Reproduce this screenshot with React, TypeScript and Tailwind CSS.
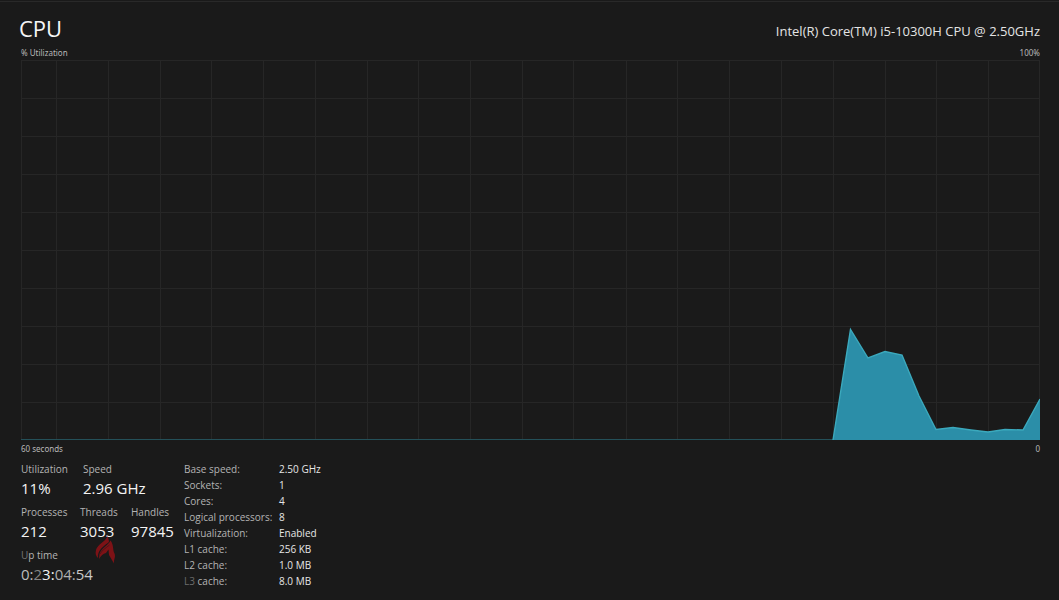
import type { ReactNode } from "react";

const CHART_WIDTH = 1019;
const CHART_HEIGHT = 380;

const columns = [35, 87, 139, 190, 242, 294, 346, 397, 449, 501, 552, 605, 656, 708, 760, 812, 864, 915, 967];
const rows = [38, 76, 114, 152, 190, 228, 266, 304, 342];

const samples =
  "812,380 829.5,269.5 847,298 864,291.5 881,295 898,336 915,369.5 932,367.5 950,370 967,372 984,369.5 1002,370 1019,339";

const specs = [
  ["Base speed:", "2.50 GHz"],
  ["Sockets:", "1"],
  ["Cores:", "4"],
  ["Logical processors:", "8"],
  ["Virtualization:", "Enabled"],
  ["L1 cache:", "256 KB"],
  ["L2 cache:", "1.0 MB"],
  ["L3 cache:", "8.0 MB"],
];

function Stat({ label, children }: { label: ReactNode; children: ReactNode }) {
  return (
    <div>
      <dt className="text-[10px] leading-4 text-[#b4b4b4]">{label}</dt>
      <dd className="text-[15px] leading-[22px] text-[#f4f4f4]">{children}</dd>
    </div>
  );
}

function UsageChart() {
  return (
    <svg
      className="block h-[380px] w-full"
      viewBox={`0 0 ${CHART_WIDTH} ${CHART_HEIGHT}`}
      preserveAspectRatio="none"
      role="img"
      aria-label="CPU utilization over 60 seconds"
    >
      <g stroke="#262626" strokeWidth="1">
        {columns.map((x) => (
          <line key={x} x1={x + 0.5} x2={x + 0.5} y1="0" y2={CHART_HEIGHT} />
        ))}
        {rows.map((y) => (
          <line key={y} x1="0" x2={CHART_WIDTH} y1={y + 0.5} y2={y + 0.5} />
        ))}
        <rect x="0.5" y="0.5" width={CHART_WIDTH - 1} height={CHART_HEIGHT - 1} fill="none" />
      </g>
      <line x1="0" x2="812" y1="379.5" y2="379.5" stroke="#245059" />
      <polygon points={`${samples} 1019,380`} fill="#2b8ea8" />
      <polyline points={samples} fill="none" stroke="#3ba9bd" strokeWidth="1.4" />
    </svg>
  );
}

function Emblem() {
  return (
    <svg className="block h-7 w-[21px]" viewBox="0 0 21 28" aria-hidden="true">
      <g fill="#7d1216">
        <path d="M12.500 0C10.500 6 2.500 8 1 14C0 18 1 20 3 22C2 14 9 10 14 6C14 4 13 2 12.500 0Z" />
        <path d="M15.500 4.500C13 10 6 12 4.500 18L4 23C6 19.500 8 17.500 11 17L13.500 13.500L14 19L19 27.500C18.500 23.500 21 21 19.500 17.500C17.500 14 19 9 15.500 4.500Z" />
      </g>
      <path d="M5 18C7 14 11 12 14.500 9" fill="none" stroke="#451518" strokeWidth="0.8" />
    </svg>
  );
}

export default function App() {
  return (
    <main className="min-h-screen bg-[#1a1a1a] pt-px font-['Open_Sans','Noto_Sans',sans-serif] text-[#e4e4e4]">
      <div className="border-t border-[#292929] pt-3 pr-[19px] pl-[21px]">
        <header className="flex h-8 items-start justify-between">
          <h1 className="-ml-0.5 text-[22px] leading-7 text-[#f6f6f6]">CPU</h1>
          <p className="pt-[7px] text-[13px] leading-5">Intel(R) Core(TM) i5-10300H CPU @ 2.50GHz</p>
        </header>
        <div className="flex h-[14px] items-center justify-between font-['Noto_Sans',sans-serif] text-[8px] text-[#b8b8b8]">
          <span>% Utilization</span>
          <span>100%</span>
        </div>
        <UsageChart />
        <div className="flex h-[18px] items-center justify-between font-['Noto_Sans',sans-serif] text-[8px] text-[#b8b8b8]">
          <span>60 seconds</span>
          <span>0</span>
        </div>
        <div className="flex pt-[3px]">
          <dl className="flex w-[163px] flex-col gap-[5px]">
            <div className="grid grid-cols-[62px_auto]">
              <Stat label="Utilization">11%</Stat>
              <Stat label="Speed">2.96 GHz</Stat>
            </div>
            <div className="relative grid grid-cols-[59px_51px_auto]">
              <Stat label="Processes">212</Stat>
              <Stat label="Threads">3053</Stat>
              <Stat label="Handles">97845</Stat>
              <div className="absolute top-8 left-[74px]">
                <Emblem />
              </div>
            </div>
            <Stat
              label={
                <>
                  <span className="text-[#777777]">U</span>p time
                </>
              }
            >
              <span className="text-[#bdbdbd]">0:</span>
              <span className="text-[#858585]">2</span>3:
              <span className="text-[#b0b0b0]">04:</span>
              <span className="text-[#c8c8c8]">54</span>
            </Stat>
          </dl>
          <table className="self-start text-left text-[10px] leading-4">
            <tbody>
              {specs.map(([name, value]) => (
                <tr key={name}>
                  <th scope="row" className="w-[95px] p-0 font-normal text-[#b4b4b4]">
                    {name === "L3 cache:" ? (
                      <>
                        <span className="text-[#6c6c6c]">L3</span> cache:
                      </>
                    ) : (
                      name
                    )}
                  </th>
                  <td className="p-0 text-[#e6e6e6]">{value}</td>
                </tr>
              ))}
            </tbody>
          </table>
        </div>
      </div>
    </main>
  );
}
